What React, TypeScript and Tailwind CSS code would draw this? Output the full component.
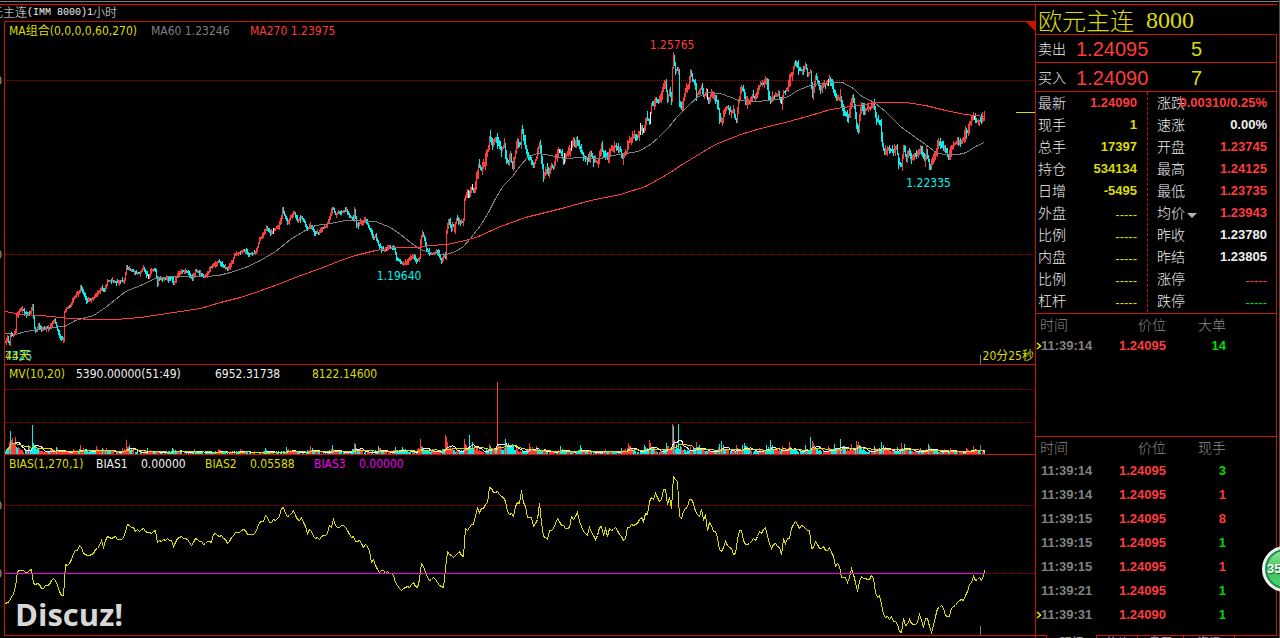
import React from "react";

type Point = [number, number];

const toPoints = (flat: number[]): Point[] => {
  const out: Point[] = [];
  for (let i = 0; i < flat.length; i += 2) out.push([flat[i], flat[i + 1]]);
  return out;
};

const PRICE = toPoints([
  5, 342, 7, 339, 9, 344, 10, 334, 13, 335, 15, 332, 16, 314, 18, 312, 20, 309, 23, 310, 24, 313, 27, 314, 30, 312, 32, 305, 33, 318, 34, 328, 36, 331,
  38, 324, 41, 330, 43, 328, 46, 327, 49, 328, 52, 323, 54, 320, 56, 326, 58, 333, 61, 338, 63, 339, 64, 312, 66, 308, 70, 306, 72, 300, 76, 294, 79, 292,
  80, 286, 83, 294, 86, 300, 90, 300, 94, 297, 97, 293, 101, 288, 104, 291, 107, 281, 112, 281, 116, 282, 120, 281, 124, 280, 126, 266, 127, 268, 131, 270,
  135, 272, 139, 273, 143, 268, 145, 272, 148, 277, 151, 270, 155, 270, 157, 285, 158, 278, 163, 279, 167, 278, 171, 278, 173, 284, 175, 279, 178, 273,
  182, 271, 188, 272, 192, 280, 195, 270, 198, 272, 203, 276, 207, 274, 210, 267, 215, 264, 218, 261, 222, 265, 227, 269, 231, 263, 234, 255, 240, 252,
  244, 250, 248, 254, 254, 253, 256, 250, 259, 239, 264, 232, 266, 227, 270, 234, 274, 229, 278, 226, 281, 217, 282, 208, 284, 215, 287, 223, 290, 217,
  294, 213, 297, 220, 301, 217, 304, 222, 306, 229, 310, 226, 314, 232, 318, 233, 321, 229, 326, 226, 329, 217, 332, 208, 333, 209, 335, 214, 340, 212,
  346, 210, 349, 216, 353, 219, 354, 210, 356, 225, 360, 222, 365, 220, 368, 226, 371, 233, 373, 239, 375, 235, 378, 245, 383, 250, 388, 247, 394, 249,
  396, 258, 400, 262, 403, 264, 406, 262, 409, 258, 413, 256, 416, 261, 419, 258, 420, 240, 422, 233, 424, 238, 426, 249, 429, 254, 433, 253, 437, 251,
  440, 259, 441, 260, 444, 255, 445, 256, 446, 233, 448, 220, 450, 225, 454, 226, 456, 219, 459, 221, 462, 222, 463, 219, 464, 200, 467, 191, 469, 196,
  471, 188, 474, 191, 475, 182, 477, 172, 478, 165, 481, 170, 484, 163, 486, 155, 488, 147, 489, 138, 492, 145, 495, 138, 498, 145, 501, 150, 504, 144,
  505, 156, 508, 164, 510, 156, 512, 168, 515, 152, 517, 142, 520, 144, 521, 130, 523, 136, 525, 146, 528, 158, 530, 158, 533, 165, 536, 157, 539, 143,
  540, 150, 542, 165, 543, 176, 546, 170, 548, 174, 551, 165, 553, 168, 555, 158, 558, 150, 560, 152, 563, 160, 566, 155, 569, 150, 572, 145, 575, 142,
  576, 138, 579, 147, 583, 156, 588, 160, 590, 152, 593, 160, 597, 162, 599, 155, 601, 148, 604, 155, 607, 157, 610, 150, 615, 146, 620, 150, 622, 158,
  626, 152, 628, 142, 631, 139, 634, 135, 637, 137, 641, 127, 643, 132, 646, 118, 649, 121, 651, 104, 653, 105, 655, 98, 658, 102, 660, 98, 662, 88,
  665, 83, 667, 99, 669, 90, 671, 101, 672, 68, 673, 56, 675, 70, 678, 70, 679, 104, 681, 107, 683, 98, 685, 91, 688, 87, 690, 71, 692, 80, 694, 82,
  696, 94, 699, 92, 701, 86, 703, 96, 706, 92, 708, 103, 710, 96, 712, 94, 714, 96, 717, 103, 719, 115, 720, 119, 722, 119, 724, 110, 727, 107, 730, 111,
  733, 110, 735, 119, 736, 120, 738, 101, 741, 88, 743, 91, 745, 103, 749, 102, 752, 96, 755, 98, 757, 90, 760, 84, 763, 83, 766, 79, 768, 93, 770, 102,
  772, 97, 775, 95, 778, 95, 781, 103, 783, 92, 786, 90, 788, 85, 790, 75, 792, 73, 794, 63, 797, 66, 800, 70, 803, 70, 805, 65, 807, 73, 810, 72,
  812, 96, 814, 86, 815, 76, 818, 83, 820, 90, 823, 84, 827, 83, 829, 79, 833, 90, 836, 100, 840, 97, 842, 110, 845, 113, 848, 116, 851, 103, 852, 96,
  854, 105, 856, 127, 858, 130, 859, 116, 861, 104, 864, 111, 867, 108, 870, 108, 873, 104, 876, 119, 880, 125, 882, 145, 884, 153, 887, 150, 891, 150,
  894, 150, 896, 146, 898, 162, 901, 165, 903, 146, 906, 160, 908, 151, 911, 157, 914, 155, 917, 155, 920, 147, 923, 157, 924, 160, 926, 151, 929, 166,
  930, 168, 932, 160, 935, 154, 937, 146, 940, 143, 943, 149, 946, 151, 948, 158, 950, 150, 953, 145, 957, 141, 960, 143, 963, 138, 965, 131, 967, 132,
  969, 123, 973, 117, 976, 121, 980, 121, 983, 119, 984, 113,
]);

const MA60 = toPoints([
  5, 333, 15, 334, 25, 331, 40, 329, 50, 328, 57, 326, 64, 326, 75, 320, 93, 315, 105, 307, 125, 291, 140, 285, 155, 278, 170, 276, 205, 276, 218, 275,
  230, 272, 245, 267, 260, 260, 275, 251, 290, 239, 305, 230, 315, 225, 330, 223, 345, 220, 375, 221, 390, 227, 400, 234, 410, 242, 420, 249, 432, 253,
  446, 254, 455, 251, 463, 246, 470, 238, 480, 225, 488, 212, 495, 198, 503, 185, 512, 176, 520, 165, 528, 156, 537, 153, 545, 154, 555, 156, 565, 158,
  580, 157, 600, 158, 612, 155, 625, 153, 638, 151, 650, 144, 658, 137, 668, 127, 676, 117, 688, 105, 698, 96, 708, 92, 720, 93, 731, 97, 738, 100,
  756, 101, 778, 99, 788, 96, 797, 90, 812, 84, 832, 82, 842, 82, 853, 88, 860, 95, 875, 103, 885, 111, 900, 126, 915, 137, 925, 144, 937, 153, 945, 154,
  958, 154, 966, 152, 975, 146, 984, 142,
]);

const MA270 = toPoints([
  5, 311, 20, 314, 40, 315, 70, 318, 95, 319, 115, 319, 140, 317, 160, 314, 180, 311, 200, 308, 220, 302, 240, 297, 258, 291, 280, 283, 300, 275,
  320, 268, 340, 260, 355, 255, 375, 250, 395, 247, 418, 247, 430, 245, 446, 244, 465, 240, 478, 236, 500, 226, 525, 217, 545, 212, 565, 207, 590, 200,
  620, 194, 645, 186, 665, 175, 685, 162, 700, 153, 715, 144, 740, 134, 760, 128, 785, 122, 810, 115, 830, 109, 850, 106, 865, 104, 873, 102, 905, 102,
  925, 105, 945, 110, 965, 114, 984, 116,
]);

const BIAS = toPoints([
  5, 602, 8, 604, 10, 597, 13, 595, 15, 585, 16, 573, 20, 568, 24, 572, 27, 573, 31, 569, 32, 577, 34, 587, 37, 582, 41, 588, 44, 586, 48, 586, 52, 577,
  56, 583, 60, 593, 63, 595, 64, 580, 65, 565, 70, 562, 73, 553, 77, 550, 80, 545, 84, 555, 90, 555, 93, 554, 97, 547, 101, 541, 103, 547, 107, 535,
  110, 538, 115, 537, 118, 540, 120, 538, 124, 538, 126, 525, 130, 526, 135, 530, 140, 531, 143, 527, 146, 534, 150, 533, 155, 530, 157, 541, 163, 540,
  170, 539, 173, 545, 178, 536, 185, 537, 192, 545, 195, 537, 198, 540, 203, 544, 208, 540, 211, 542, 213, 534, 217, 534, 222, 536, 227, 543, 231, 537,
  235, 532, 240, 532, 244, 528, 248, 535, 254, 535, 258, 525, 260, 521, 263, 522, 266, 513, 270, 524, 273, 518, 276, 520, 279, 515, 282, 504, 285, 513,
  288, 516, 291, 513, 294, 511, 298, 520, 301, 516, 304, 524, 307, 532, 309, 530, 313, 535, 318, 539, 322, 536, 326, 536, 329, 526, 331, 527, 333, 520,
  336, 526, 342, 526, 346, 527, 350, 538, 353, 537, 356, 543, 359, 539, 363, 546, 365, 543, 369, 550, 371, 561, 373, 560, 376, 570, 380, 571, 385, 572,
  391, 572, 394, 578, 397, 585, 401, 589, 405, 587, 408, 588, 411, 583, 413, 582, 416, 588, 418, 584, 420, 572, 421, 563, 424, 568, 426, 578, 430, 579,
  435, 578, 438, 583, 441, 587, 444, 586, 445, 570, 446, 555, 448, 551, 450, 556, 454, 557, 456, 551, 459, 553, 463, 554, 465, 530, 468, 530, 470, 528,
  471, 524, 474, 527, 475, 515, 477, 508, 479, 512, 482, 508, 484, 505, 487, 502, 488, 492, 489, 487, 490, 494, 492, 486, 494, 494, 497, 492, 501, 495,
  504, 497, 506, 507, 508, 516, 510, 511, 512, 517, 515, 507, 517, 500, 520, 503, 521, 491, 523, 500, 526, 511, 528, 521, 531, 517, 533, 526, 537, 517,
  539, 505, 540, 515, 542, 530, 544, 538, 546, 536, 547, 540, 549, 532, 552, 532, 555, 523, 558, 516, 560, 525, 563, 527, 566, 526, 569, 525, 571, 516,
  573, 519, 576, 512, 578, 516, 581, 528, 582, 534, 584, 531, 586, 532, 588, 539, 589, 525, 591, 534, 594, 536, 596, 540, 599, 529, 600, 525, 603, 533,
  605, 530, 607, 537, 609, 528, 613, 527, 617, 531, 620, 533, 623, 539, 625, 538, 628, 522, 630, 528, 634, 522, 637, 521, 641, 516, 643, 521, 645, 513,
  648, 514, 649, 500, 651, 497, 654, 499, 655, 493, 658, 497, 659, 503, 662, 493, 665, 487, 667, 505, 669, 495, 671, 506, 672, 476, 674, 476, 677, 481,
  678, 513, 681, 518, 684, 505, 686, 511, 690, 494, 692, 500, 694, 510, 697, 513, 699, 516, 701, 510, 703, 520, 705, 516, 707, 530, 709, 524, 712, 527,
  713, 530, 716, 532, 718, 545, 720, 550, 722, 550, 724, 541, 727, 544, 730, 546, 732, 549, 734, 557, 736, 545, 738, 530, 740, 530, 742, 530, 744, 548,
  746, 544, 749, 545, 753, 540, 756, 538, 758, 531, 761, 533, 763, 528, 765, 527, 768, 543, 771, 546, 775, 545, 779, 545, 781, 554, 783, 540, 785, 542,
  787, 536, 788, 541, 790, 530, 792, 527, 794, 518, 797, 525, 800, 528, 804, 524, 806, 532, 809, 532, 811, 550, 813, 549, 815, 539, 817, 545, 819, 548,
  822, 546, 825, 548, 828, 552, 830, 546, 833, 557, 835, 565, 838, 560, 840, 572, 842, 580, 845, 578, 848, 585, 850, 572, 852, 566, 854, 577, 856, 590,
  858, 592, 860, 575, 862, 573, 864, 580, 868, 578, 873, 576, 875, 590, 877, 595, 880, 595, 882, 611, 884, 620, 887, 618, 892, 617, 894, 622, 896, 617,
  898, 628, 901, 630, 903, 616, 906, 628, 908, 618, 911, 625, 914, 623, 918, 620, 920, 612, 922, 625, 924, 626, 926, 614, 928, 625, 930, 632, 932, 627,
  935, 618, 937, 608, 942, 607, 945, 613, 948, 618, 950, 611, 954, 605, 957, 600, 960, 603, 963, 598, 965, 593, 968, 590, 969, 582, 971, 583, 973, 576,
  976, 579, 978, 578, 982, 579, 983, 573, 984, 570,
]);

// [x, height, rising] of the bars that stand out
const VOLUME_PEAKS: [number, number, boolean][] = [
  [9, 11, true], [10, 22, false], [11, 13, true], [12, 15, true], [15, 16, true], [28, 8, false], [32, 28, false], [33, 10, false], [35, 8, false],
  [50, 5, true], [56, 6, false], [73, 4, true], [80, 8, true], [96, 7, true], [102, 5, false], [106, 5, true], [122, 5, true], [126, 13, true],
  [147, 5, false], [172, 5, false], [194, 4, true], [218, 4, true], [240, 4, true], [265, 5, false], [286, 6, false], [310, 7, true], [332, 8, false],
  [354, 10, true], [355, 9, false], [378, 7, false], [395, 6, false], [402, 6, false], [420, 14, true], [422, 6, false], [445, 18, true],
  [446, 16, true], [447, 11, true], [464, 14, true], [465, 9, true], [469, 18, false], [472, 11, false], [489, 9, true], [497, 71, true],
  [505, 14, false], [508, 10, false], [512, 9, false], [529, 10, true], [536, 7, true], [560, 7, false], [580, 8, false], [605, 4, true],
  [621, 5, false], [628, 10, true], [644, 8, false], [649, 13, true], [650, 10, true], [666, 10, false], [672, 29, true], [673, 27, false],
  [674, 13, true], [678, 29, false], [690, 6, true], [696, 11, true], [699, 8, false], [719, 9, false], [721, 12, false], [736, 8, true],
  [742, 8, false], [744, 10, false], [759, 5, true], [766, 8, false], [770, 13, false], [782, 7, true], [789, 11, true], [805, 8, false],
  [810, 16, false], [812, 12, true], [828, 7, true], [834, 9, false], [840, 14, false], [851, 9, true], [856, 12, true], [858, 11, true],
  [874, 7, false], [881, 11, false], [883, 8, false], [897, 6, false], [901, 10, true], [904, 9, false], [920, 5, true], [928, 9, false],
  [944, 4, true], [950, 5, true], [966, 5, true], [973, 7, true],
];

const FIRST_X = 5;
const LAST_X = 984;
const VOLUME_BASE = 454;

const noise = (n: number) => {
  const v = Math.sin(n * 127.1 + 11.7) * 43758.5453;
  return v - Math.floor(v);
};

const valueAt = (points: Point[], x: number) => {
  for (let i = 1; i < points.length; i++) {
    const [x1, y1] = points[i];
    const [x0, y0] = points[i - 1];
    if (x <= x1) return y0 + ((y1 - y0) * (x - x0)) / (x1 - x0);
  }
  return points[points.length - 1][1];
};

const line = (points: Point[]) => points.map(([x, y]) => `${x + 0.5},${y + 0.5}`).join(" ");

// one vertex every second pixel, with the small jitter of hourly closes
const jitteredLine = (points: Point[]) => {
  const out: Point[] = [];
  for (let x = FIRST_X; x <= LAST_X; x += 2) {
    const swing = x < 440 ? 3 : 5;
    out.push([x, Math.round(valueAt(points, x) + (noise(x + 210) - 0.5) * swing)]);
  }
  out.push(points[points.length - 1]);
  return line(out);
};

const buildCandles = () => {
  const paths = { up: "", down: "", flat: "" };
  let prev = PRICE[0][1];
  for (let x = FIRST_X; x <= LAST_X; x++) {
    const y = valueAt(PRICE, x);
    const spread = x < 440 ? 4 : 8;
    const high = Math.min(prev, y) - noise(x) * noise(x + 7) * spread - 0.5;
    const low = Math.max(prev, y) + noise(x + 3000) * noise(x + 31) * spread + 1;
    const segment = `M${x + 0.5},${Math.round(high)}V${Math.round(low)}`;
    if (noise(x + 900) > 0.985) paths.flat += segment;
    else if (y - prev + (noise(x + 60) - 0.5) * 2.4 < 0) paths.up += segment;
    else paths.down += segment;
    prev = y;
  }
  return paths;
};

const buildVolume = () => {
  const heights: number[] = [];
  const rising: boolean[] = [];
  for (let x = FIRST_X; x <= LAST_X; x++) {
    const scale = x < 190 || x > 410 ? 1 : 0.7;
    let h = noise(x + 400) * 2.6 * scale;
    let up = noise(Math.floor(x / 3) + 70) > 0.5;
    for (const [px, ph, pUp] of VOLUME_PEAKS) {
      const d = x - px;
      if (d === 0) {
        h = ph;
        up = pUp;
        break;
      }
      if (d > -4 && d < 8) h = Math.max(h, Math.min(ph, 12) * (d < 0 ? 0.4 : 0.75 - d * 0.07) * (0.5 + noise(x) * 0.7));
    }
    heights.push(Math.round(h));
    rising.push(up);
  }
  const average = (size: number) =>
    heights
      .map((_, i) => {
        const part = heights.slice(Math.max(0, i - size + 1), i + 1);
        const mean = part.reduce((a, b) => a + Math.min(b, 45), 0) / part.length;
        return `${i + FIRST_X + 0.5},${Math.round(VOLUME_BASE - 1 - mean) + 0.5}`;
      })
      .join(" ");
  let up = "";
  let down = "";
  heights.forEach((h, i) => {
    if (h <= 0) return;
    const segment = `M${i + FIRST_X + 0.5},${VOLUME_BASE}v${-h - 1}`;
    if (rising[i]) up += segment;
    else down += segment;
  });
  return { up, down, fast: average(10), slow: average(20) };
};

const candles = buildCandles();
const volume = buildVolume();
const biasLine = jitteredLine(BIAS);

const RED = "text-[#ff3c3c]";
const YELLOW = "text-[#dcdc00]";
const WHITE = "text-[#f0f0f0]";
const GREEN = "text-[#00dc00]";

const LEFT_QUOTES = [
  { label: "最新", value: "1.24090", color: RED },
  { label: "现手", value: "1", color: YELLOW },
  { label: "总手", value: "17397", color: YELLOW },
  { label: "持仓", value: "534134", color: YELLOW },
  { label: "日增", value: "-5495", color: YELLOW },
  { label: "外盘", value: "-----", color: YELLOW },
  { label: "比例", value: "-----", color: YELLOW },
  { label: "内盘", value: "-----", color: YELLOW },
  { label: "比例", value: "-----", color: YELLOW },
  { label: "杠杆", value: "-----", color: YELLOW },
];

const RIGHT_QUOTES = [
  { label: "涨跌", value: "0.00310/0.25%", color: RED },
  { label: "速涨", value: "0.00%", color: WHITE },
  { label: "开盘", value: "1.23745", color: RED },
  { label: "最高", value: "1.24125", color: RED },
  { label: "最低", value: "1.23735", color: RED },
  { label: "均价", value: "1.23943", color: RED, menu: true },
  { label: "昨收", value: "1.23780", color: WHITE },
  { label: "昨结", value: "1.23805", color: WHITE },
  { label: "涨停", value: "-----", color: RED },
  { label: "跌停", value: "-----", color: GREEN },
];

const BIG_ORDERS = [{ time: "11:39:14", price: "1.24095", size: "14", color: GREEN, current: true }];

const TICKS = [
  { time: "11:39:14", price: "1.24095", size: "3", color: GREEN },
  { time: "11:39:14", price: "1.24095", size: "1", color: RED },
  { time: "11:39:15", price: "1.24095", size: "8", color: RED },
  { time: "11:39:15", price: "1.24095", size: "1", color: GREEN },
  { time: "11:39:15", price: "1.24095", size: "1", color: RED },
  { time: "11:39:21", price: "1.24095", size: "1", color: GREEN },
  { time: "11:39:31", price: "1.24090", size: "1", color: GREEN, current: true },
];

type Quote = { label: string; value: string; color: string; menu?: boolean };
type Trade = { time: string; price: string; size: string; color: string; current?: boolean };

const GridLine = ({ y, from = 5 }: { y: number; from?: number }) => (
  <path d={`M${from},${y + 0.5}H1035`} stroke="#b40000" strokeDasharray="1 1" />
);

const Chart = ({ top, height, className, children }: { top: number; height: number; className: string; children: React.ReactNode }) => (
  <svg className={`block w-full ${className}`} viewBox={`5 ${top} 1030 ${height}`} preserveAspectRatio="none" shapeRendering="crispEdges" fill="none">
    {children}
  </svg>
);

const QuoteList = ({ items, className }: { items: Quote[]; className: string }) => (
  <dl className={className}>
    {items.map((item, i) => (
      <div key={i} className="flex h-[22px] items-center justify-between">
        <dt className="flex w-0 items-center whitespace-nowrap text-sm font-light text-[#f0f0f0]">
          {item.label}
          {item.menu && (
            <button aria-label="均价" className="ml-[2px] mt-1 shrink-0">
              <svg width="10" height="5" viewBox="0 0 10 5" className="block">
                <path d="M0,0H10L5,5Z" fill="#b4b4b4" />
              </svg>
            </button>
          )}
        </dt>
        <dd className={`text-[13px] ${item.value === "-----" ? "pt-1 font-normal" : "font-bold"} ${item.color}`}>{item.value}</dd>
      </div>
    ))}
  </dl>
);

const TradeTable = ({ sizeLabel, trades, rowClass }: { sizeLabel: string; trades: Trade[]; rowClass: string }) => (
  <table className="w-full table-fixed border-collapse text-right">
    <colgroup>
      <col className="w-[70px]" />
      <col className="w-[60px]" />
      <col className="w-[60px]" />
      <col />
    </colgroup>
    <thead>
      <tr className="h-[22px] text-sm text-[#8c8c8c]">
        <th className="p-0 pl-1 text-left font-light">时间</th>
        <th className="p-0 font-light">价位</th>
        <th className="p-0 font-light">{sizeLabel}</th>
        <td />
      </tr>
    </thead>
    <tbody>
      {trades.map((t, i) => (
        <tr key={i} className={`text-[13px] font-bold ${rowClass}`}>
          <td className="p-0 text-left text-[#808080]">
            <div className="flex items-center">
              <span className="w-[5px] shrink-0">
                {t.current && (
                  <svg width="6" height="8" viewBox="0 0 6 8" className="block">
                    <path d="M1,1L4.5,4L1,7" fill="none" stroke="#f0f000" strokeWidth="1.5" />
                  </svg>
                )}
              </span>
              {t.time}
            </div>
          </td>
          <td className={`p-0 ${RED}`}>{t.price}</td>
          <td className={`p-0 ${t.color}`}>{t.size}</td>
          <td />
        </tr>
      ))}
    </tbody>
  </table>
);

const PricePanel = () => (
  <section>
    <div className="flex h-4 items-center pl-1 pt-[2px] leading-4">
      <span className={`w-[142px] ${YELLOW}`}>MA组合(0,0,0,0,60,270)</span>
      <span className="w-[99px] text-[#808080]">MA60 1.23246</span>
      <span className={RED}>MA270 1.23975</span>
    </div>
    <div className="relative">
      <Chart top={38} height={326} className="h-[326px]">
        <GridLine y={80} />
        <GridLine y={254} />
        <path d={candles.up} stroke="#ff3c3c" />
        <path d={candles.down} stroke="#00f0f0" />
        <path d={candles.flat} stroke="#f0f0f0" />
        <polyline points={line(MA60)} stroke="#808080" />
        <polyline points={line(MA270)} stroke="#ff3c3c" />
        <path d="M1016,112.5H1035" stroke="#dcdc00" />
        <path d="M980.5,355V364" stroke="#808080" />
      </Chart>
      <span className={`absolute left-[62.6%] top-0 leading-[14px] ${RED}`}>1.25765</span>
      <span className="absolute left-[36.1%] top-[230px] leading-4 text-[#00f0f0]">1.19640</span>
      <span className="absolute left-[87.5%] top-[137px] leading-4 text-[#00f0f0]">1.22335</span>
      <span className="absolute bottom-0 left-0 leading-4 text-[#00f0f0]">7325</span>
      <span className={`absolute bottom-0 left-0 leading-4 ${YELLOW}`}>44天</span>
      <span className={`absolute bottom-0 right-px leading-4 ${YELLOW}`}>20分25秒</span>
    </div>
  </section>
);

const VolumePanel = () => (
  <section className="border-t border-[#c81400]">
    <div className="flex h-4 items-center pl-1 pt-[2px] leading-4">
      <span className={`w-[67px] ${YELLOW}`}>MV(10,20)</span>
      <span className={`w-[139px] ${WHITE}`}>5390.00000(51:49)</span>
      <span className={`w-[97px] ${WHITE}`}>6952.31738</span>
      <span className={YELLOW}>8122.14600</span>
    </div>
    <Chart top={381} height={73} className="h-[73px]">
      <GridLine y={389} />
      <GridLine y={422} />
      <path d={volume.up} stroke="#ff3c3c" />
      <path d={volume.down} stroke="#00f0f0" />
      <polyline points={volume.fast} stroke="#f0f0f0" />
      <polyline points={volume.slow} stroke="#dcdc00" />
      <path d="M980.5,445V454" stroke="#808080" />
    </Chart>
  </section>
);

const BiasPanel = () => (
  <section className="relative border-b border-t border-[#c81400]">
    <div className="flex h-4 items-center pl-1 pt-[2px] leading-4">
      <span className={`w-[87px] ${YELLOW}`}>BIAS(1,270,1)</span>
      <span className={`w-[45px] ${WHITE}`}>BIAS1</span>
      <span className={`w-[64px] ${WHITE}`}>0.00000</span>
      <span className={`w-[45px] ${YELLOW}`}>BIAS2</span>
      <span className={`w-[64px] ${YELLOW}`}>0.05588</span>
      <span className="w-[45px] text-[#f000f0]">BIAS3</span>
      <span className="text-[#f000f0]">0.00000</span>
    </div>
    <Chart top={471} height={164} className="h-[164px]">
      <GridLine y={505} />
      <GridLine y={573} from={984} />
      <polyline points={biasLine} stroke="#dcdc00" />
      <path d="M5,573.5H984" stroke="#f000f0" />
      <path d="M980.5,626V635" stroke="#808080" />
    </Chart>
    <span className='absolute bottom-0 left-[10px] font-["Open_Sans"] text-[31px] font-bold leading-[42px] text-[#d7d7d7]'>Discuz!</span>
  </section>
);

const QuotePanel = () => (
  <aside className="flex w-[245px] shrink-0 flex-col border-l border-[#c81400]">
    <h1 className={`flex h-[29px] shrink-0 items-center gap-3 pl-[2px] text-2xl font-light ${YELLOW}`}>
      <span className='font-["Noto_Sans_CJK_SC",sans-serif]'>欧元主连</span>
      <span className='font-["Liberation_Serif",serif]'>8000</span>
    </h1>
    <div className="mr-[3px] shrink-0 border border-l-0 border-[#c81400]">
      <div className="flex h-[28px] items-center border-b border-[#c81400] pl-[2px]">
        <span className="w-[38px] text-sm font-light text-[#f0f0f0]">卖出</span>
        <span className={`w-[115px] text-xl ${RED}`}>1.24095</span>
        <span className={`text-xl ${YELLOW}`}>5</span>
      </div>
      <div className="flex h-[29px] items-center border-b border-[#c81400] pl-[2px] pt-[2px]">
        <span className="w-[38px] text-sm font-light text-[#f0f0f0]">买入</span>
        <span className={`w-[115px] text-xl ${RED}`}>1.24090</span>
        <span className={`text-xl ${YELLOW}`}>7</span>
      </div>
      <div className="flex border-b border-[#c81400] pb-px">
        <QuoteList items={LEFT_QUOTES} className="w-[112px] border-r border-dashed border-[#c81400] pl-[2px] pr-[10px]" />
        <QuoteList items={RIGHT_QUOTES} className="flex-1 pl-[9px] pr-[9px]" />
      </div>
      <div className="h-[123px] border-b border-[#c81400]">
        <TradeTable sizeLabel="大单" trades={BIG_ORDERS} rowClass="h-[18px]" />
      </div>
      <div className="h-[198px]">
        <TradeTable sizeLabel="现手" trades={TICKS} rowClass="h-6" />
      </div>
    </div>
    <nav className="flex h-[14px] shrink-0 pl-[10px] text-xs leading-3 text-[#a0a0a0]">
      <button className="-mt-px w-[51px] border-x border-[#c81400] bg-black pt-px">明细</button>
      <button className="w-[41px] border-r border-[#c81400]">分价</button>
      <button className="w-[46px] border-r border-[#c81400]">盘口</button>
      <button className="w-[51px] border-r border-[#c81400]">资讯</button>
    </nav>
  </aside>
);

export default function App() {
  return (
    <div className='relative flex h-screen flex-col overflow-hidden bg-black pt-px font-["Liberation_Sans","Noto_Sans_CJK_SC",sans-serif] text-[#f0f0f0]'>
      <div className="h-px shrink-0 bg-[#808080]" />
      <div className="mr-[3px] mt-[2px] h-px shrink-0 bg-[#f00000]" />
      <div className="flex min-h-0 flex-1">
        <main className='flex min-w-0 flex-1 flex-col whitespace-nowrap font-["DejaVu_Sans_Condensed","DejaVu_Sans","Noto_Sans_CJK_SC",sans-serif] text-xs'>
          <header className="-ml-[21px] flex h-4 shrink-0 items-center font-light text-[#f0f0f0]">
            <span>欧元主连</span>
            <span className='whitespace-pre font-["Liberation_Mono",monospace] text-[10px]'>(IMM 8000)1</span>
            <span>小时</span>
          </header>
          <div className="flex">
            <div className="relative w-1 shrink-0 overflow-hidden text-[#a0a0a0]">
              <span className="absolute right-[2px] top-[52px] leading-4">0</span>
              <span className="absolute right-[2px] top-[226px] leading-4">0</span>
              <span className="absolute right-[2px] top-[477px] leading-4">0</span>
              <span className="absolute right-[2px] top-[545px] leading-4">0</span>
            </div>
            <div className="relative min-w-0 flex-1 border-l border-t border-[#c81400]">
              <PricePanel />
              <VolumePanel />
              <BiasPanel />
              <svg width="9" height="9" className="absolute right-0 top-0">
                <path d="M0,0H9V9Z" fill="#c81400" />
              </svg>
            </div>
          </div>
        </main>
        <QuotePanel />
      </div>
      <div className="absolute right-0 top-0 h-full w-px bg-[#505050]" />
      <button className="absolute -right-7 top-[546px] flex size-[46px] items-center rounded-full border-[3px] border-[#f0f0f0] bg-[#1e8c50] p-[2px]">
        <span className="flex size-full items-center rounded-full bg-linear-to-b from-[#8ce696] via-[#3cc35a] to-[#50d26e] text-[13px] font-bold text-white [text-shadow:1px_1px_1px_#145a28]">
          35
        </span>
      </button>
    </div>
  );
}
